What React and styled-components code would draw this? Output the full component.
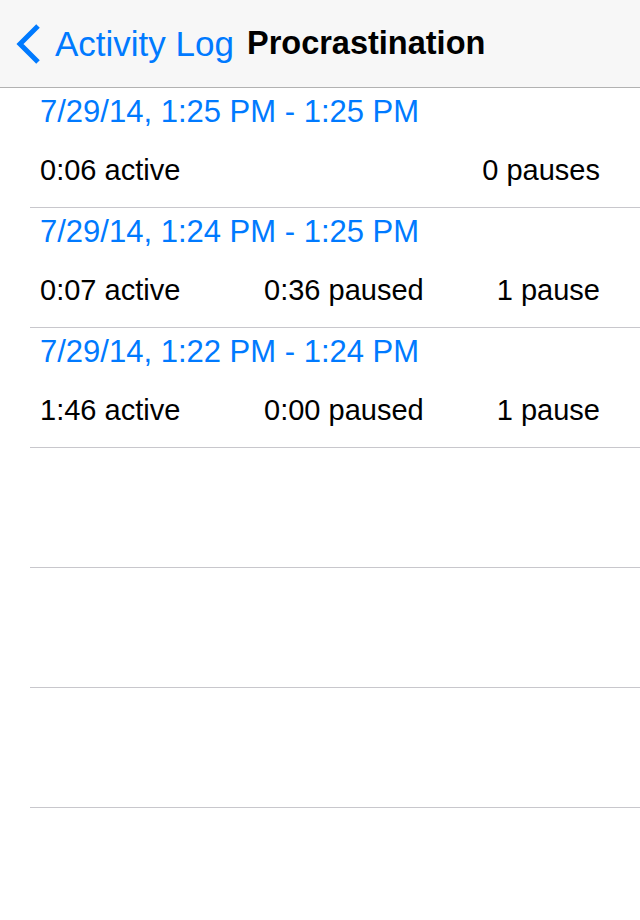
import React from 'react';
import styled, { createGlobalStyle } from 'styled-components';

const GlobalStyle = createGlobalStyle`
  body {
    margin: 0;
    background: #ffffff;
    font-family: "Liberation Sans", Arial, sans-serif;
  }
`;

const sessions = [
  { range: '7/29/14, 1:25 PM - 1:25 PM', active: '0:06 active', paused: '', pauses: '0 pauses' },
  { range: '7/29/14, 1:24 PM - 1:25 PM', active: '0:07 active', paused: '0:36 paused', pauses: '1 pause' },
  { range: '7/29/14, 1:22 PM - 1:24 PM', active: '1:46 active', paused: '0:00 paused', pauses: '1 pause' },
];

const Screen = styled.div`
  width: 640px;
  height: 920px;
  background: #ffffff;
  overflow: hidden;
`;

const NavBar = styled.div`
  height: 87px;
  background: #f7f7f7;
  border-bottom: 1px solid #b2b2b2;
  display: flex;
  align-items: center;
  padding-left: 15px;
  box-sizing: content-box;
`;

const BackButton = styled.div`
  display: flex;
  align-items: center;
  gap: 12px;
  color: #007aff;
  font-size: 35px;

  svg {
    width: 28px;
    height: 42px;
    margin-top: 1px;
  }
`;

const Title = styled.div`
  margin-left: 13px;
  color: #000000;
  font-size: 32.5px;
  font-weight: bold;
`;

const List = styled.div`
  display: flex;
  flex-direction: column;
`;

const Row = styled.div`
  height: 120px;
  margin-left: 30px;
  padding: 0 40px 0 10px;
  border-bottom: 1px solid #c8c7cc;
  box-sizing: border-box;
  display: flex;
  flex-direction: column;
`;

const DateLine = styled.div`
  color: #007aff;
  font-size: 31px;
  line-height: 36px;
  margin-top: 6px;
`;

const Stats = styled.div`
  display: grid;
  grid-template-columns: 224px 1fr auto;
  color: #000000;
  font-size: 29px;
  line-height: 34px;
  margin-top: 23px;
`;

const Right = styled.span`
  text-align: right;
`;

const Chevron = () => (
  <svg viewBox="0 0 28 42">
    <polyline points="23,3 5,21 23,39" fill="none" stroke="#007aff" strokeWidth="5" strokeLinecap="butt" strokeLinejoin="miter" />
  </svg>
);

export default function App() {
  return (
    <Screen>
      <GlobalStyle />
      <NavBar>
        <BackButton>
          <Chevron />
          <span>Activity Log</span>
        </BackButton>
        <Title>Procrastination</Title>
      </NavBar>
      <List>
        {sessions.map((s) => (
          <Row key={s.range}>
            <DateLine>{s.range}</DateLine>
            <Stats>
              <span>{s.active}</span>
              <span>{s.paused}</span>
              <Right>{s.pauses}</Right>
            </Stats>
          </Row>
        ))}
        <Row />
        <Row />
        <Row />
      </List>
    </Screen>
  );
}
